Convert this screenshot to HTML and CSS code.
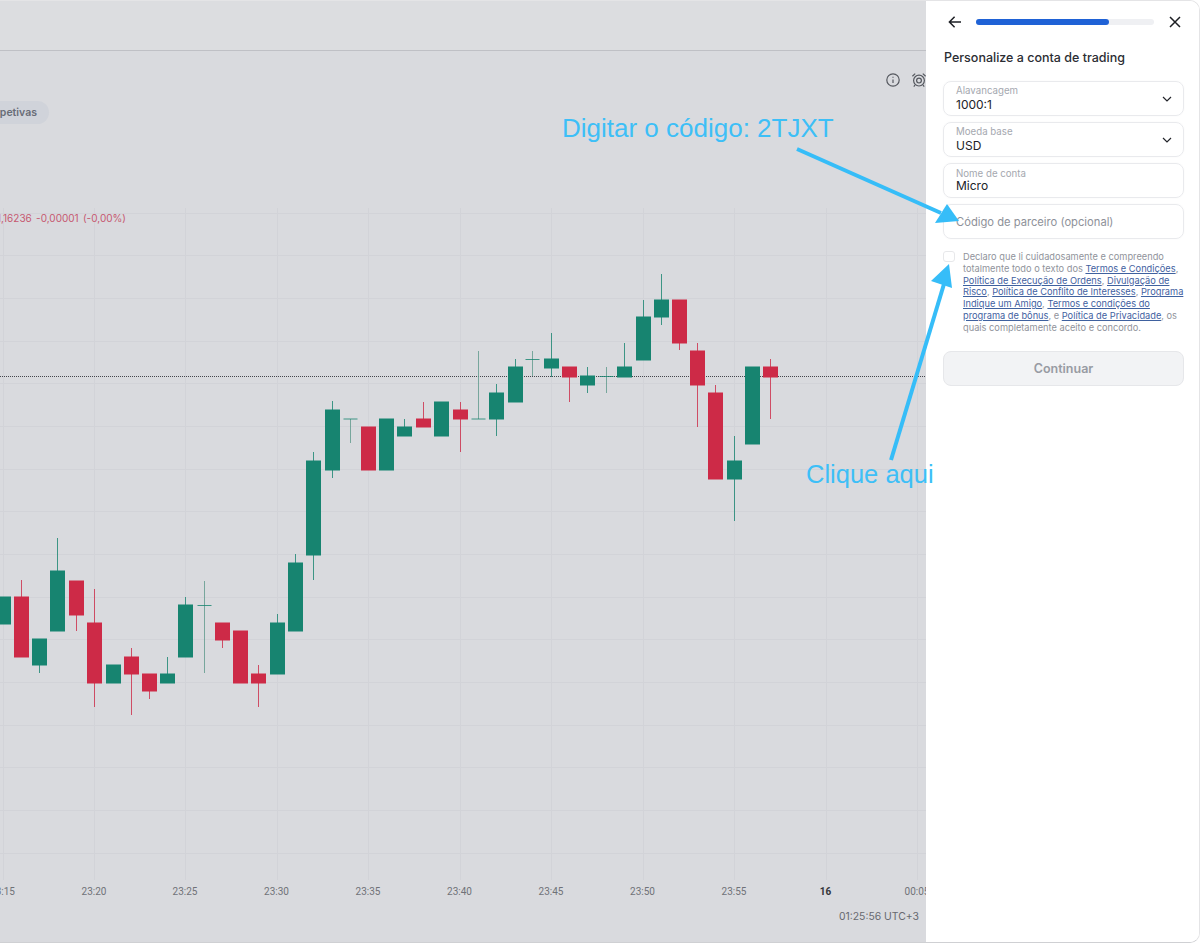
FILE: index.html
```html
<!DOCTYPE html>
<html lang="pt">
  <head>
    <meta charset="UTF-8" />
    <meta name="viewport" content="width=device-width, initial-scale=1.0" />
    <title>Personalize a conta de trading</title>
    <link rel="stylesheet" href="styles.css">
  </head>
  <body>
    <div class="app">
      <main class="chart-area">
        <div class="chart-header"></div>

        <div class="chart-tools">
          <svg class="tool-icon" viewBox="0 0 16 16">
            <circle cx="8" cy="8" r="6.2" />
            <path d="M8 7.4v3.6M8 4.8v1" />
          </svg>
          <svg class="tool-icon" viewBox="0 0 16 16">
            <circle cx="8" cy="8.6" r="5.4" />
            <circle cx="8" cy="8.6" r="2.4" />
            <path d="M1.4 4.2 4.2 1.6M14.6 4.2 11.8 1.6M4 13l-1.2 1.6M12 13l1.2 1.6" />
          </svg>
        </div>

        <div class="tag-row">
          <span class="tag">Perspetivas</span>
        </div>

        <!-- candles get drawn into #candles by chart.js -->
        <svg class="chart-canvas" id="chart" width="926" height="946" viewBox="0 0 926 946">
          <g id="grid"></g>
          <line class="price-line" x1="0" y1="376.5" x2="926" y2="376.5" />
          <g id="candles"></g>
          <text class="price-info" x="126" y="222">1,16236 -0,00001 (-0,00%)</text>
          <g class="axis-labels">
            <text x="2.5" y="894.5">23:15</text>
            <text x="94" y="894.5">23:20</text>
            <text x="185" y="894.5">23:25</text>
            <text x="276.5" y="894.5">23:30</text>
            <text x="368" y="894.5">23:35</text>
            <text x="459.5" y="894.5">23:40</text>
            <text x="551" y="894.5">23:45</text>
            <text x="642.5" y="894.5">23:50</text>
            <text x="734" y="894.5">23:55</text>
            <text class="axis-day" x="825.5" y="894.5">16</text>
            <text x="917" y="894.5">00:05</text>
          </g>
          <text class="clock" x="919" y="919.5">01:25:56 UTC+3</text>
        </svg>
      </main>

      <aside class="panel">
        <div class="panel-top">
          <svg class="top-icon" viewBox="0 0 14 14">
            <path d="M13 7H1.5M6.6 1.8 1.4 7l5.2 5.2" />
          </svg>
          <div class="progress"><div class="progress-fill"></div></div>
          <svg class="top-icon" viewBox="0 0 14 14">
            <path d="M2 2l10 10M12 2 2 12" />
          </svg>
        </div>

        <h1 class="panel-title">Personalize a conta de trading</h1>

        <div class="form-fields">
          <div class="field">
            <div class="field-text">
              <span class="field-label">Alavancagem</span>
              <span class="field-value">1000:1</span>
            </div>
            <svg class="chevron" viewBox="0 0 10 6"><path d="M1 1l4 4 4-4" /></svg>
          </div>
          <div class="field">
            <div class="field-text">
              <span class="field-label">Moeda base</span>
              <span class="field-value">USD</span>
            </div>
            <svg class="chevron" viewBox="0 0 10 6"><path d="M1 1l4 4 4-4" /></svg>
          </div>
          <div class="field field-plain">
            <div class="field-text">
              <span class="field-label">Nome de conta</span>
              <span class="field-value">Micro</span>
            </div>
          </div>
          <div class="field">
            <span class="field-placeholder">Código de parceiro (opcional)</span>
          </div>
        </div>

        <div class="terms">
          <span class="checkbox"></span>
          <p class="terms-text">
            Declaro que li cuidadosamente e compreendo<br>
            totalmente todo o texto dos <a href="#">Termos e Condições</a>,<br>
            <a href="#">Política de Execução de Ordens</a>, <a href="#">Divulgação de</a><br>
            <a href="#">Risco</a>, <a href="#">Política de Conflito de Interesses</a>, <a href="#">Programa</a><br>
            <a href="#">Indique um Amigo</a>, <a href="#">Termos e condições do</a><br>
            <a href="#">programa de bônus</a>, e <a href="#">Política de Privacidade</a>, os<br>
            quais completamente aceito e concordo.
          </p>
        </div>

        <button class="continue-btn" disabled>Continuar</button>
      </aside>

      <!-- annotations on top of the screenshot -->
      <span class="note note-code">Digitar o código: 2TJXT</span>
      <span class="note note-click">Clique aqui</span>
      <svg class="arrows" width="1200" height="946" viewBox="0 0 1200 946">
        <path d="M797 149 941 213" />
        <polygon points="959,221 935,223 947,204" />
        <path d="M891 460 944 284" />
        <polygon points="949,264 952,288 931,281" />
      </svg>
    </div>

    <script src="chart.js"></script>
  </body>
</html>
```

FILE: styles.css
```css
* {
  box-sizing: border-box;
}

body {
  margin: 0;
  background-color: #fff;
  font-family: "Inter", "Liberation Sans", sans-serif;
}

.app {
  position: relative;
  display: flex;
  width: 1200px;
  height: 943px;
  overflow: hidden;
  border: 1px solid #e4e4e6;
  border-left: none;
  border-bottom-color: #cfd0d3;
  border-radius: 0 10px 10px 0;
}

/* Chart side */
.chart-area {
  position: relative;
  width: 926px;
  flex-shrink: 0;
  background-color: #d9dade;
}

.chart-header {
  height: 50px;
  background-color: #dcdde0;
  border-bottom: 1px solid #bfc0c5;
}

.chart-tools {
  display: flex;
  justify-content: flex-end;
  gap: 10px;
  margin-top: 21px;
  margin-right: -1px;
}

.tool-icon {
  width: 16px;
  height: 16px;
  fill: none;
  stroke: #55585f;
  stroke-width: 1.2;
}

.tag-row {
  margin-top: 12px;
  margin-left: -35px;
}

.tag {
  display: inline-flex;
  align-items: center;
  height: 23px;
  padding: 0 12px;
  border-radius: 12px;
  background-color: #d0d3da;
  color: #686c77;
  font-size: 10.5px;
  font-weight: 600;
}

.chart-canvas {
  position: absolute;
  top: -1px;
  left: 0;
}

.grid-line {
  stroke: #d2d3d8;
  stroke-width: 1;
}

.price-line {
  stroke: #44464c;
  stroke-width: 1;
  stroke-dasharray: 1 1;
}

.wick {
  stroke-width: 1;
  opacity: 0.8;
}

.up {
  fill: #178470;
  stroke: #178470;
}

.down {
  fill: #cd2a47;
  stroke: #cd2a47;
}

.doji {
  stroke: #5f9a8c;
}

.price-info {
  font-size: 10px;
  word-spacing: 1.5px;
  fill: #c65870;
  text-anchor: end;
}

.axis-labels text {
  font-family: "Roboto", "Liberation Sans", sans-serif;
  font-size: 10px;
  fill: #707278;
  text-anchor: middle;
}

.axis-labels .axis-day {
  fill: #33353a;
  font-weight: 700;
}

.clock {
  font-size: 10.4px;
  fill: #67696f;
  text-anchor: end;
}

/* Right panel */
.panel {
  flex: 1;
  min-width: 0;
  padding: 0 15px 0 17px;
  background-color: #fff;
}

.panel-top {
  display: flex;
  align-items: center;
  gap: 14px;
  height: 42px;
  padding: 0 2px 0 5px;
}

.top-icon {
  width: 14px;
  height: 14px;
  flex-shrink: 0;
  fill: none;
  stroke: #1d1f24;
  stroke-width: 1.5;
}

.progress {
  flex: 1;
  height: 6px;
  border-radius: 3px;
  background-color: #eff0f3;
}

.progress-fill {
  width: 74.5%;
  height: 100%;
  border-radius: 3px;
  background-color: #1f62d6;
}

.panel-title {
  margin: 7px 0 0 1px;
  font-size: 12.5px;
  line-height: 16px;
  font-weight: 500;
  color: #2b2d33;
}

.form-fields {
  display: flex;
  flex-direction: column;
  gap: 6px;
  margin-top: 15px;
}

.field {
  display: flex;
  align-items: center;
  justify-content: space-between;
  height: 35px;
  padding: 0 11px 0 12px;
  border: 1px solid #e9eaed;
  border-radius: 8px;
  box-shadow: 0 0 2px rgba(0, 0, 0, 0.04);
}

.field-text {
  display: flex;
  flex-direction: column;
}

.field-label {
  margin-top: -1px;
  font-size: 9.7px;
  line-height: 11px;
  color: #a5a8af;
}

.field-value {
  margin-top: 1px;
  font-size: 12px;
  line-height: 15px;
  color: #202228;
}

.field-plain .field-label {
  margin-top: 0;
}

.field-plain .field-value {
  margin-top: -1px;
}

.field-placeholder {
  font-size: 11.2px;
  color: #8e9199;
}

.chevron {
  width: 10px;
  height: 6px;
  fill: none;
  stroke: #23252b;
  stroke-width: 1.2;
}

.terms {
  display: flex;
  gap: 8px;
  margin-top: 12px;
}

.checkbox {
  width: 12px;
  height: 11px;
  flex-shrink: 0;
  border: 1px solid #e7e8ea;
  border-radius: 3px;
}

.terms-text {
  margin: 0;
  font-size: 9.25px;
  line-height: 11.8px;
  color: #90939b;
  white-space: nowrap;
}

.terms-text a {
  color: #3f619f;
}

.continue-btn {
  display: block;
  width: 100%;
  height: 35px;
  margin-top: 17px;
  background-color: #f2f3f5;
  border: 1px solid #e6e7ea;
  border-radius: 8px;
  color: #989ba3;
  font-family: inherit;
  font-size: 12.5px;
  font-weight: 600;
}

/* Annotations */
.note {
  position: absolute;
  color: #3dbff7;
  font-family: "Liberation Sans", Arial, sans-serif;
  font-size: 26px;
  line-height: 30px;
  white-space: nowrap;
}

.note-code {
  top: 112px;
  left: 562px;
}

.note-click {
  top: 458px;
  left: 806px;
  font-size: 25.5px;
}

.arrows {
  position: absolute;
  top: -1px;
  left: 0;
  pointer-events: none;
}

.arrows path {
  fill: none;
  stroke: #36bdf8;
  stroke-width: 4;
}

.arrows polygon {
  fill: #36bdf8;
}
```

FILE: chart.js
```js
// Candle data: [x, bodyTop, bodyBottom, wickTop, wickBottom, type]
const data = [
  [2.5, 597, 624, 597, 624, "up"],
  [20.7, 597, 657, 580, 657, "down"],
  [39, 639, 665, 639, 673, "up"],
  [57.3, 571, 631, 538, 631, "up"],
  [76, 581, 615, 581, 631, "down"],
  [94.3, 623, 683, 589, 707, "down"],
  [112.5, 665, 683, 665, 683, "up"],
  [130.5, 657, 674, 648, 715, "down"],
  [148.7, 674, 691, 674, 699, "down"],
  [167, 674, 683, 657, 683, "up"],
  [185.3, 605, 657, 597, 657, "up"],
  [204, 605.5, 605.5, 581, 673, "doji"],
  [222, 623, 640, 623, 648, "down"],
  [240.3, 631, 683, 631, 683, "down"],
  [258, 674, 683, 665, 707, "down"],
  [276.7, 623, 674, 614, 674, "up"],
  [295, 563, 631, 554, 631, "up"],
  [313, 461, 555, 452, 580, "up"],
  [331.7, 410, 470, 401, 478, "up"],
  [350, 419, 419, 419, 443, "doji"],
  [368.3, 427, 470, 427, 470, "down"],
  [386.3, 419, 470, 419, 470, "up"],
  [404.3, 427, 436, 419, 436, "up"],
  [422.7, 419, 427, 402, 427, "down"],
  [441, 402, 436, 402, 436, "up"],
  [459.7, 410, 419, 402, 452, "down"],
  [478, 419, 419, 351, 419, "doji"],
  [496.3, 393, 419, 384, 436, "up"],
  [514.7, 367, 402, 359, 402, "up"],
  [532.3, 359.5, 359.5, 351, 376, "doji"],
  [550.7, 359, 368, 333, 377, "up"],
  [569, 367, 377, 367, 402, "down"],
  [587.3, 376, 385, 367, 393, "up"],
  [605.7, 376.5, 376.5, 367, 393, "doji"],
  [624.3, 367, 377, 343, 377, "up"],
  [642.7, 317, 360, 300, 360, "up"],
  [661, 300, 317, 274, 325, "up"],
  [678.7, 300, 343, 300, 350, "down"],
  [697, 351, 385, 343, 427, "down"],
  [715.3, 393, 479, 385, 479, "down"],
  [733.7, 461, 479, 436, 521, "up"],
  [752, 367, 444, 367, 444, "up"],
  [770.3, 367, 377, 359, 419, "down"],
];

const SVG_NS = "http://www.w3.org/2000/svg";

function add(parent, tag, attrs) {
  const el = document.createElementNS(SVG_NS, tag);
  Object.keys(attrs).forEach((key) => el.setAttribute(key, attrs[key]));
  parent.appendChild(el);
  return el;
}

// Grid
const grid = document.getElementById("grid");
for (let i = 0; i < 16; i++) {
  const y = Math.round(212.7 + i * 42.67) + 0.5;
  add(grid, "line", { class: "grid-line", x1: 0, y1: y, x2: 926, y2: y });
}
for (let i = 0; i < 11; i++) {
  const x = Math.round(2.5 + i * 91.45) + 0.5;
  add(grid, "line", { class: "grid-line", x1: x, y1: 208, x2: x, y2: 880 });
}

// Candles
const candles = document.getElementById("candles");
data.forEach(([x, top, bottom, wickTop, wickBottom, type]) => {
  const cx = Math.round(x) + 0.5;
  const kind = type === "doji" ? "up doji" : type;
  add(candles, "line", { class: "wick " + kind, x1: cx, y1: wickTop, x2: cx, y2: wickBottom });
  if (type === "doji") {
    add(candles, "line", { class: "wick up", x1: cx - 7, y1: top, x2: cx + 7, y2: top });
  } else {
    add(candles, "rect", { class: type, x: cx - 7, y: top, width: 14, height: bottom - top, stroke: "none" });
  }
});
```
